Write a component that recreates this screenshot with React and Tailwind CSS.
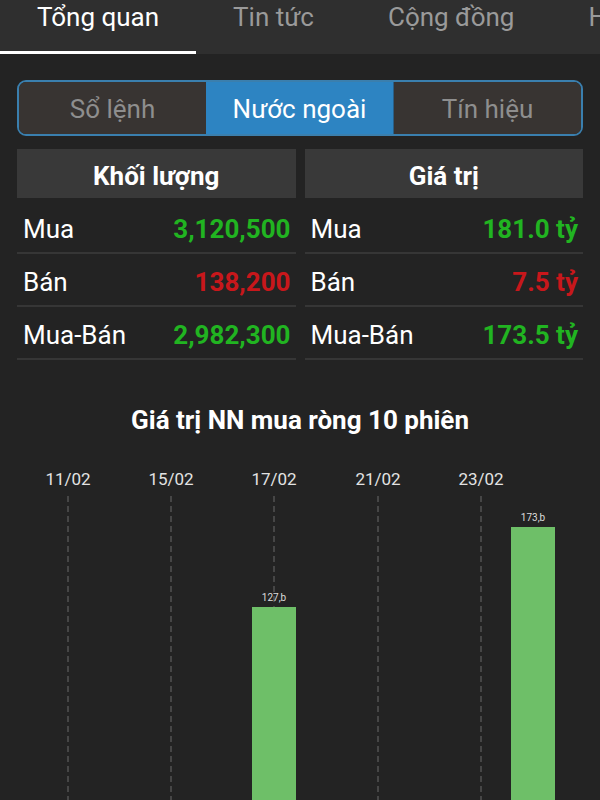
import React from 'react';

const tabs = ['Tổng quan', 'Tin tức', 'Cộng đồng', 'Hồ sơ'];
const segments = ['Sổ lệnh', 'Nước ngoài', 'Tín hiệu'];

const volumeRows = [
  { label: 'Mua', value: '3,120,500', up: true },
  { label: 'Bán', value: '138,200', up: false },
  { label: 'Mua-Bán', value: '2,982,300', up: true }
];

const valueRows = [
  { label: 'Mua', value: '181.0 tỷ', up: true },
  { label: 'Bán', value: '7.5 tỷ', up: false },
  { label: 'Mua-Bán', value: '173.5 tỷ', up: true }
];

const dates = [
  { x: 68, label: '11/02' },
  { x: 171, label: '15/02' },
  { x: 274, label: '17/02' },
  { x: 378, label: '21/02' },
  { x: 481, label: '23/02' }
];

const bars = [
  { x: 274, top: 152, label: '127,b' },
  { x: 533, top: 72, label: '173,b' }
];

const StatColumn = ({ title, rows }) => (
  <div className="flex-1 flex flex-col">
    <div className="h-[49px] pt-[5px] bg-[#393939] flex items-center justify-center text-[26px] font-bold text-white">
      {title}
    </div>
    <div className="mt-[3px]">
      {rows.map((row) => (
        <div
          key={row.label}
          className="h-[53px] pt-[5px] flex items-center justify-between pl-[6px] pr-[5px] border-b-2 border-[#363636]"
        >
          <span className="text-[26px] text-white">{row.label}</span>
          <span className={`text-[26px] font-bold ${row.up ? 'text-[#21b421]' : 'text-[#c8171b]'}`}>
            {row.value}
          </span>
        </div>
      ))}
    </div>
  </div>
);

export default function App() {
  return (
    <div className="w-[600px] h-[800px] overflow-hidden bg-[#232323]" style={{ fontFamily: 'Roboto, "Noto Sans", sans-serif' }}>
      {/* top tabs */}
      <div className="h-[54px] bg-[#2f2f2f] flex whitespace-nowrap overflow-hidden">
        {tabs.map((tab, i) => (
          <div key={tab} className="relative px-[37px] h-full shrink-0">
            <div className={`pt-[2px] leading-[30px] text-[26px] ${i === 0 ? 'text-white' : 'text-[#9a9a9a]'}`}>
              {tab}
            </div>
            {i === 0 && <div className="absolute left-0 right-0 bottom-0 h-[3px] bg-white" />}
          </div>
        ))}
      </div>

      {/* segmented control */}
      <div className="mx-[17px] mt-[26px] h-[56px] flex border-2 border-[#3a7fae] rounded-[9px] overflow-hidden">
        {segments.map((seg, i) => (
          <div
            key={seg}
            className={`flex-1 flex items-center justify-center pt-[3px] text-[26px] ${
              i === 1 ? 'bg-[#2d84c2] text-white' : 'bg-[#383432] text-[#8e8e8e]'
            } ${i === 2 ? 'border-l border-[#2a5f86]' : ''}`}
          >
            {seg}
          </div>
        ))}
      </div>

      {/* stats */}
      <div className="mx-[17px] mt-[13px] flex gap-[9px]">
        <StatColumn title="Khối lượng" rows={volumeRows} />
        <StatColumn title="Giá trị" rows={valueRows} />
      </div>

      {/* chart */}
      <div className="mt-[45px] text-center text-[26px] leading-[30px] font-bold text-white">
        Giá trị NN mua ròng 10 phiên
      </div>
      <svg width="600" height="345" className="block mt-[20px]">
        {dates.map((d) => (
          <g key={d.label}>
            <text x={d.x} y="30" textAnchor="middle" fontSize="17" fill="#e2e2e2">{d.label}</text>
            <line x1={d.x} y1="41" x2={d.x} y2="345" stroke="#6a6a6a" strokeWidth="1" strokeDasharray="6 4" />
          </g>
        ))}
        {bars.map((b) => (
          <g key={b.label}>
            <rect x={b.x - 22} y={b.top} width="44" height={345 - b.top} fill="#6ebf68" />
            <text x={b.x} y={b.top - 6} textAnchor="middle" fontSize="10" fill="#dddddd">{b.label}</text>
          </g>
        ))}
      </svg>
    </div>
  );
}
